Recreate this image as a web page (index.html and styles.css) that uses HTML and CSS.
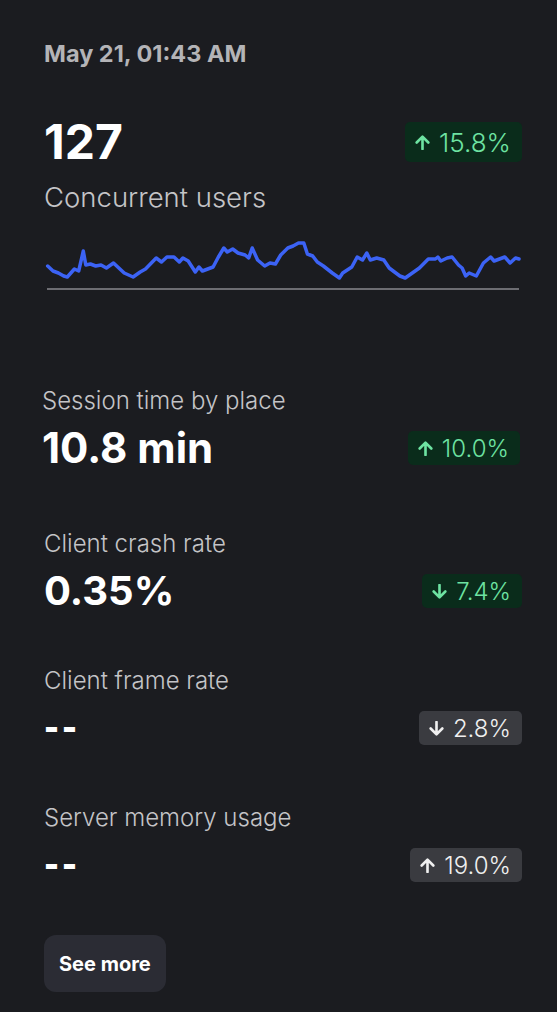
FILE: index.html
```html
<!DOCTYPE html>
<html lang="en">
<head>
  <meta charset="UTF-8">
  <meta name="viewport" content="width=device-width, initial-scale=1.0">
  <title>Experience Stats</title>
  <link rel="stylesheet" href="styles.css">
</head>
<body>
  <div class="panel">
    <div class="timestamp">May 21, 01:43 AM</div>

    <div class="hero-row">
      <div class="hero-value">127</div>
      <span class="badge badge-up badge-large">
        <svg class="arrow" viewBox="0 0 16 16"><path d="M8 15V1.8M1.8 8L8 1.8 14.2 8"/></svg>
        15.8%
      </span>
    </div>
    <div class="hero-label">Concurrent users</div>

    <svg class="sparkline" viewBox="0 0 478 56" preserveAspectRatio="none">
      <line class="baseline" x1="3" y1="53" x2="475" y2="53"/>
      <polyline class="trend" points="3.7,30 9,35 14.4,37 19.7,40 23.3,41 30.4,33 34.7,35 39.3,15 41.8,29 46.4,28 51.7,30 57,29 62.4,32 69.5,27 80.2,37 89.1,41 96.2,36 101.5,33 112.2,22 117.5,26 122.9,21 130,21 135.3,26 138.9,22 144.2,25 151.3,36 154.9,31 158.4,35 169.1,31 174.4,21 179.8,12 183.3,16 188.7,13 194,17 201.1,19 204.7,22 208.2,12 213.6,24 220.7,30 226,27 231.4,28 236.7,19 243.8,12 249.1,10 254.5,7 259.8,7 263.4,18 268.7,20 273.3,26 279.4,30 288.3,37 295.4,42 298.7,37 307.8,31 313.2,21 318.5,24 322.8,17 326.3,24 332.7,22 339.8,24 345.2,32 350.5,36 355.9,40 361.2,42 368.3,37 375.4,32 384.3,23 391.4,23 393.9,21 396.8,25 403.2,22 408.1,21 414.5,29 418.1,32 421.7,40 425.2,37 432.3,40 439.4,27 446.6,21 450.1,25 460.8,21 466.1,27 471.5,22 475,23"/>
    </svg>

    <div class="metric metric-shift">
      <div class="metric-label">Session time by place</div>
      <div class="metric-row">
        <div class="metric-value">10.8 min</div>
        <span class="badge badge-up">
          <svg class="arrow" viewBox="0 0 16 16"><path d="M8 15V1.8M1.8 8L8 1.8 14.2 8"/></svg>
          10.0%
        </span>
      </div>
    </div>

    <div class="metric metric-crash">
      <div class="metric-label">Client crash rate</div>
      <div class="metric-row">
        <div class="metric-value metric-value-small">0.35%</div>
        <span class="badge badge-up">
          <svg class="arrow" viewBox="0 0 16 16"><path d="M8 1V14.2M1.8 8L8 14.2 14.2 8"/></svg>
          7.4%
        </span>
      </div>
    </div>

    <div class="metric">
      <div class="metric-label">Client frame rate</div>
      <div class="metric-row">
        <div class="metric-empty">--</div>
        <span class="badge badge-neutral">
          <svg class="arrow" viewBox="0 0 16 16"><path d="M8 1V14.2M1.8 8L8 14.2 14.2 8"/></svg>
          2.8%
        </span>
      </div>
    </div>

    <div class="metric">
      <div class="metric-label">Server memory usage</div>
      <div class="metric-row">
        <div class="metric-empty">--</div>
        <span class="badge badge-neutral">
          <svg class="arrow" viewBox="0 0 16 16"><path d="M8 15V1.8M1.8 8L8 1.8 14.2 8"/></svg>
          19.0%
        </span>
      </div>
    </div>

    <button class="see-more">See more</button>
  </div>
</body>
</html>
```

FILE: styles.css
```css
body {
  margin: 0;
  padding: 0;
  font-family: Inter, "Noto Sans", sans-serif;
  background-color: #1b1c20;
  color: #ffffff;
}

.panel {
  display: flex;
  flex-direction: column;
  padding: 40px 35px 0 44px;
}

.timestamp {
  font-size: 23.5px;
  line-height: 28px;
  font-weight: 700;
  color: #b4b4b7;
}

.hero-row {
  display: flex;
  align-items: center;
  justify-content: space-between;
  margin-top: 50px;
}

.hero-value {
  font-size: 48px;
  line-height: 48px;
  font-weight: 700;
}

.hero-label {
  margin-top: 15px;
  font-size: 27.5px;
  line-height: 32px;
  font-weight: 300;
  color: #c4c4c7;
}

.sparkline {
  display: block;
  width: 478px;
  height: 56px;
  margin-top: 23px;
}

.sparkline .baseline {
  stroke: #6d6d72;
  stroke-width: 2;
}

.sparkline .trend {
  fill: none;
  stroke: #3c63f5;
  stroke-width: 3.5;
  stroke-linejoin: round;
  stroke-linecap: round;
}

.metric {
  margin-top: 53px;
}

.metric-shift {
  margin-top: 94px;
  margin-left: -2px;
  margin-right: 2px;
}

.metric-crash {
  margin-top: 59px;
}

.metric-label {
  font-size: 24px;
  line-height: 30px;
  font-weight: 300;
  color: #c4c4c7;
}

.metric-row {
  display: flex;
  align-items: center;
  justify-content: space-between;
  height: 44px;
  margin-top: 10px;
}

.metric-value {
  font-size: 42px;
  line-height: 44px;
  font-weight: 700;
}

.metric-value-small {
  font-size: 40px;
}

.metric-empty {
  font-family: "DejaVu Sans", sans-serif;
  font-size: 36px;
  line-height: 44px;
  font-weight: 700;
  letter-spacing: 3px;
}

.badge {
  display: inline-flex;
  align-items: center;
  gap: 9px;
  height: 34px;
  padding: 0 11px 0 10px;
  border-radius: 5px;
  font-size: 24px;
  font-weight: 300;
}

.badge-large {
  height: 40px;
  font-size: 26px;
}

.badge-up {
  background-color: #0a2c1b;
  color: #6ee3a2;
}

.badge-neutral {
  background-color: #3a3b40;
  color: #f0f0f0;
}

.arrow {
  width: 15px;
  height: 15px;
  fill: none;
  stroke: currentColor;
  stroke-width: 2.8;
  stroke-linecap: round;
  stroke-linejoin: round;
}

.see-more {
  align-self: flex-start;
  margin-top: 48px;
  height: 57px;
  padding: 0 15px;
  border: none;
  border-radius: 12px;
  background-color: #2b2c34;
  color: #ffffff;
  font-family: Inter, "Noto Sans", sans-serif;
  font-size: 20px;
  font-weight: 700;
  cursor: pointer;
}
```
